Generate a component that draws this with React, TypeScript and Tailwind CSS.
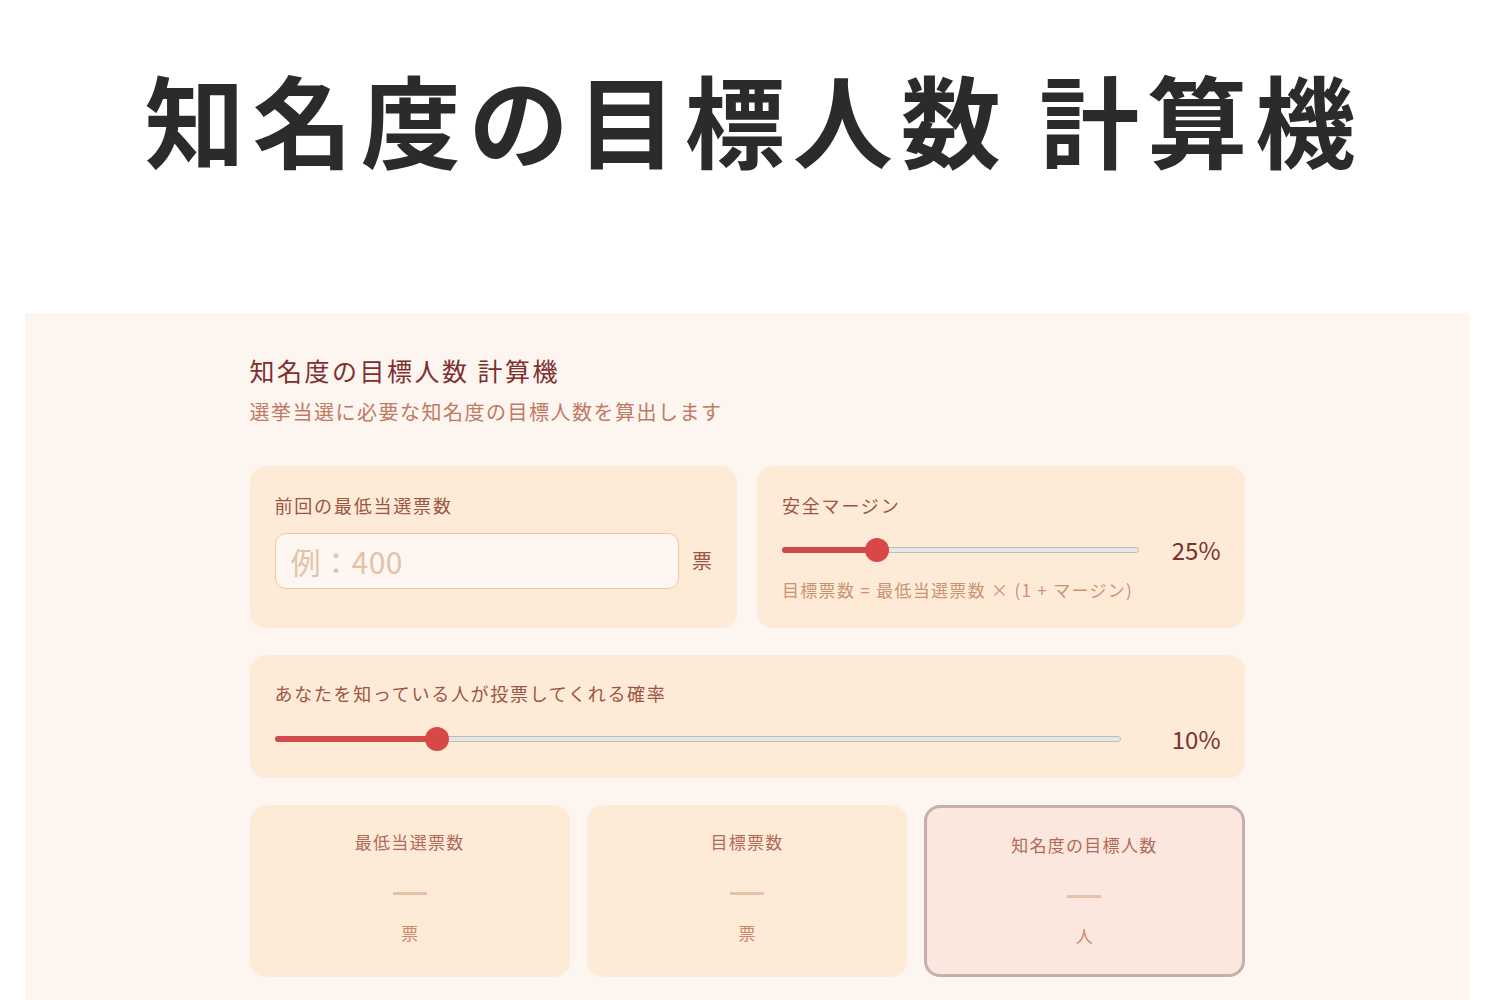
import React from "react";

const font = { fontFamily: '"Noto Sans CJK JP", "Noto Sans", sans-serif' };

function Slider({ frac }: { frac: number }) {
  return (
    <div className="relative h-[22px] flex-1 flex items-center">
      <div className="relative h-[6px] w-full rounded-full bg-[#e6e6e6] border border-[#bdbdbd]">
        <div
          className="absolute left-[-1px] top-[-1px] h-[6px] rounded-full bg-[#cf4a4a]"
          style={{ width: `${frac * 100}%` }}
        />
      </div>
      <div
        className="absolute top-0 h-[24px] w-[24px] -ml-[12px] -mt-[1px] rounded-full bg-[#d94848]"
        style={{ left: `${frac * 100}%` }}
      />
    </div>
  );
}

function ResultCard({ label, unit, highlight }: { label: string; unit: string; highlight?: boolean }) {
  return (
    <div
      className={
        highlight
          ? "flex flex-col items-center rounded-[16px] border-[3px] border-[#c7adab] bg-[#fce7df] pt-[24px] h-[172px]"
          : "flex flex-col items-center rounded-[16px] bg-[#fdebd8] pt-[24px] h-[172px]"
      }
    >
      <div className="text-[17px] leading-[26px] tracking-[1.3px] text-[#b06a55]">{label}</div>
      <div className="mt-[37px] h-[3px] w-[34px] bg-[#e4c3aa]" />
      <div className="mt-[26px] text-[17px] leading-[24px] text-[#c9896a]">{unit}</div>
    </div>
  );
}

export default function App() {
  return (
    <div className="min-h-[1000px] bg-white overflow-hidden" style={font}>
      <h1 className="pt-[56px] pl-[8px] text-center text-[100px] leading-[124px] font-bold text-[#2b2b2b] tracking-[8px]">
        知名度の目標人数 計算機
      </h1>
      <div className="mt-[133px] ml-[25px] w-[1444px] h-[700px] bg-[#fdf5f0]">
        <div className="mx-auto w-[995px] pt-[40px]">
          <h2 className="text-[25px] leading-[34px] tracking-[2.5px] text-[#7d2f2f]">知名度の目標人数 計算機</h2>
          <p className="mt-[11px] text-[20px] leading-[28px] tracking-[1.5px] text-[#bf7a63]">選挙当選に必要な知名度の目標人数を算出します</p>

          <div className="mt-[40px] grid grid-cols-2 gap-[20px]">
            <div className="rounded-[16px] bg-[#fdebd8] h-[162px] px-[25px] pt-[26px]">
              <div className="text-[18px] leading-[26px] tracking-[1.8px] text-[#9c5541]">前回の最低当選票数</div>
              <div className="mt-[15px] flex items-center gap-[13px]">
                <div className="h-[56px] w-[405px] rounded-[11px] border border-[#f1c6a1] bg-[#fef6f0] flex items-center px-[15px]">
                  <span className="text-[30px] tracking-[0.5px] text-[#e2c3aa]">例：400</span>
                </div>
                <span className="text-[20px] text-[#9c5541]">票</span>
              </div>
            </div>
            <div className="rounded-[16px] bg-[#fdebd8] h-[162px] pl-[25px] pr-[24px] pt-[26px]">
              <div className="text-[18px] leading-[26px] tracking-[1.8px] text-[#9c5541]">安全マージン</div>
              <div className="mt-[16px] flex items-center">
                <div className="w-[357px] flex">
                  <Slider frac={0.267} />
                </div>
                <div className="flex-1 text-right text-[24px] leading-[32px] text-[#7d2f2f]">25%</div>
              </div>
              <div className="mt-[12px] text-[17px] leading-[24px] tracking-[1.3px] text-[#cc9272]">目標票数 = 最低当選票数 × (1 + マージン)</div>
            </div>
          </div>

          <div className="mt-[27px] rounded-[16px] bg-[#fdebd8] h-[123px] pl-[25px] pr-[24px] pt-[25px]">
            <div className="text-[18px] leading-[26px] tracking-[1.7px] text-[#9c5541]">あなたを知っている人が投票してくれる確率</div>
            <div className="mt-[17px] flex items-center">
              <div className="w-[846px] flex">
                <Slider frac={0.192} />
              </div>
              <div className="flex-1 text-right text-[24px] leading-[32px] text-[#7d2f2f]">10%</div>
            </div>
          </div>

          <div className="mt-[27px] grid grid-cols-3 gap-[17px]">
            <ResultCard label="最低当選票数" unit="票" />
            <ResultCard label="目標票数" unit="票" />
            <ResultCard label="知名度の目標人数" unit="人" highlight />
          </div>
        </div>
      </div>
    </div>
  );
}
